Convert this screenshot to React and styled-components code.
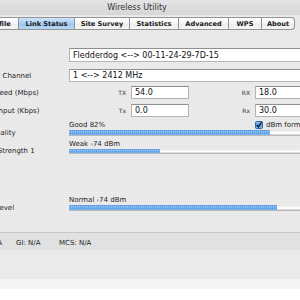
import React from 'react';
import styled, { createGlobalStyle } from 'styled-components';

const GlobalStyle = createGlobalStyle`
  html, body {
    margin: 0;
    padding: 0;
    width: 300px;
    height: 300px;
    overflow: hidden;
    background: #ffffff;
    font-family: "DejaVu Sans", "Liberation Sans", sans-serif;
  }
`;

const Window = styled.div`
  width: 340px;
  height: 300px;
  margin-left: -26px;
  display: flex;
  flex-direction: column;
  background: repeating-linear-gradient(
    to bottom,
    #ececec 0px,
    #ececec 1px,
    #e7e7e7 1px,
    #e7e7e7 2px
  );
`;

const TitleBar = styled.div`
  height: 15px;
  padding-right: 14px;
  display: flex;
  align-items: center;
  justify-content: center;
  font-size: 8px;
  color: #333;
  background: linear-gradient(#e4e4e4, #d6d6d6);
`;

const TabStrip = styled.div`
  display: flex;
  justify-content: flex-end;
  padding-right: 19px;
  margin-top: 2px;
  height: 13px;
`;

const Tab = styled.div`
  width: ${p => p.w}px;
  box-sizing: border-box;
  display: flex;
  align-items: center;
  justify-content: center;
  font-size: 6.6px;
  font-weight: bold;
  color: #1a1a1a;
  border: 1px solid #939393;
  border-left: none;
  background: ${p =>
    p.active
      ? 'linear-gradient(#cfe5fa, #a9cdf2 50%, #98c3ee 51%, #b9d9f6)'
      : 'linear-gradient(#ffffff, #f4f4f4 50%, #ebebeb 51%, #f5f5f5)'};
  &:last-child {
    border-radius: 0 4px 4px 0;
  }
`;

const Form = styled.div`
  padding-top: 18px;
  display: flex;
  flex-direction: column;
`;

const Row = styled.div`
  display: grid;
  grid-template-columns: 95px 1fr;
  align-items: ${p => (p.bottom ? 'end' : 'center')};
  margin-top: ${p => p.top || 0}px;
`;

const Label = styled.div`
  font-size: 7px;
  color: #1e1e1e;
  white-space: nowrap;
  line-height: ${p => (p.bottom ? '6px' : 'normal')};
`;

const Field = styled.div`
  height: ${p => p.h || 13}px;
  box-sizing: border-box;
  background: #fff;
  border: 1px solid #b4b4b4;
  border-top-color: #8f8f8f;
  padding-left: 3px;
  font-size: 8px;
  color: #111;
  display: flex;
  align-items: center;
  white-space: nowrap;
  overflow: hidden;
`;

const Pair = styled.div`
  display: grid;
  grid-template-columns: 62px 58px 66px 1fr;
  align-items: center;
`;

const Tiny = styled.div`
  font-size: 6px;
  color: #333;
  text-align: right;
  padding-right: 5px;
`;

const Meter = styled.div`
  display: flex;
  flex-direction: column;
`;

const Caption = styled.div`
  display: grid;
  grid-template-columns: 186px 1fr;
  height: 8px;
  align-items: center;
  font-size: 7px;
  color: #1e1e1e;
  white-space: nowrap;
`;

const Check = styled.div`
  display: flex;
  align-items: center;
  gap: 3px;
  font-size: 7px;
`;

const Track = styled.div`
  margin-top: 1px;
  height: ${p => p.h || 6}px;
  box-sizing: border-box;
  background: linear-gradient(#dcdcdc, #f6f6f6 30%, #ffffff 70%, #c4c4c4);
  border-bottom: 1px solid #b9b9b9;
`;

const Fill = styled.div`
  height: 100%;
  background:
    repeating-linear-gradient(90deg, rgba(255,255,255,0.18) 0 1px, rgba(0,0,0,0) 1px 2px),
    linear-gradient(#3f86dc, #7eb7f3 35%, #5ea2ea 55%, #4f98e6 80%, #88c0f5);
`;

const StatusBand = styled.div`
  margin-top: 21px;
  height: 18px;
  box-sizing: border-box;
  border-top: 1px solid #c6c6c6;
  background: #e1e1e1;
  display: grid;
  grid-template-columns: 42px 43px auto;
  align-items: center;
  padding-top: 2px;
  font-size: 7px;
  color: #1e1e1e;
`;

const Spacer = styled.div`
  height: 29px;
  background: #eaeaea;
`;

const Fade = styled.div`
  height: 10px;
  background: #f4f4f4;
`;

const Bottom = styled.div`
  flex: 1;
  background: #ffffff;
`;

function CheckBox() {
  return (
    <svg width="8" height="8" viewBox="0 0 8 8">
      <defs>
        <linearGradient id="cb" x1="0" y1="0" x2="0" y2="1">
          <stop offset="0" stopColor="#9cc8f4" />
          <stop offset="0.5" stopColor="#4e94e4" />
          <stop offset="1" stopColor="#7fb8f0" />
        </linearGradient>
      </defs>
      <rect x="0.5" y="0.5" width="7" height="7" rx="1" fill="url(#cb)" stroke="#35679f" />
      <path d="M1.8 4.2 L3.3 6 L6.6 1" fill="none" stroke="#111" strokeWidth="1.3" />
    </svg>
  );
}

function Bar({ value, h }) {
  return (
    <Track h={h}>
      <Fill style={{ width: `${value}%` }} />
    </Track>
  );
}

const tabs = [
  { name: 'Profile', w: 40 },
  { name: 'Link Status', w: 56, active: true },
  { name: 'Site Survey', w: 55 },
  { name: 'Statistics', w: 49 },
  { name: 'Advanced', w: 50 },
  { name: 'WPS', w: 33 },
  { name: 'About', w: 33 },
];

export default function App() {
  return (
    <>
      <GlobalStyle />
      <Window>
        <TitleBar>Wireless Utility</TitleBar>
        <TabStrip>
          {tabs.map(t => (
            <Tab key={t.name} w={t.w} active={t.active}>
              {t.name}
            </Tab>
          ))}
        </TabStrip>
        <Form>
          <Row>
            <Label>Status</Label>
            <Field h={14}>Fledderdog &lt;--&gt; 00-11-24-29-7D-15</Field>
          </Row>
          <Row top={7}>
            <Label>Current Channel</Label>
            <Field>1 &lt;--&gt; 2412 MHz</Field>
          </Row>
          <Row top={4}>
            <Label>Link Speed (Mbps)</Label>
            <Pair>
              <Tiny>TX</Tiny>
              <Field>54.0</Field>
              <Tiny>RX</Tiny>
              <Field>18.0</Field>
            </Pair>
          </Row>
          <Row top={5}>
            <Label>Throughput (Kbps)</Label>
            <Pair>
              <Tiny>Tx</Tiny>
              <Field>0.0</Field>
              <Tiny>Rx</Tiny>
              <Field>30.0</Field>
            </Pair>
          </Row>
          <Row top={4} bottom>
            <Label bottom>Link Quality</Label>
            <Meter>
              <Caption>
                <span>Good 82%</span>
                <Check>
                  <CheckBox />
                  <span>dBm format</span>
                </Check>
              </Caption>
              <Bar value={82} />
            </Meter>
          </Row>
          <Row top={4} bottom>
            <Label bottom>Signal Strength 1</Label>
            <Meter>
              <Caption>
                <span>Weak -74 dBm</span>
              </Caption>
              <Bar value={37} h={5} />
            </Meter>
          </Row>
          <Row top={42} bottom>
            <Label bottom>Noise Level</Label>
            <Meter>
              <Caption>
                <span>Normal -74 dBm</span>
              </Caption>
              <Bar value={85} />
            </Meter>
          </Row>
        </Form>
        <StatusBand>
          <span>BW: N/A</span>
          <span>GI: N/A</span>
          <span>MCS: N/A</span>
        </StatusBand>
        <Spacer />
        <Fade />
        <Bottom />
      </Window>
    </>
  );
}
